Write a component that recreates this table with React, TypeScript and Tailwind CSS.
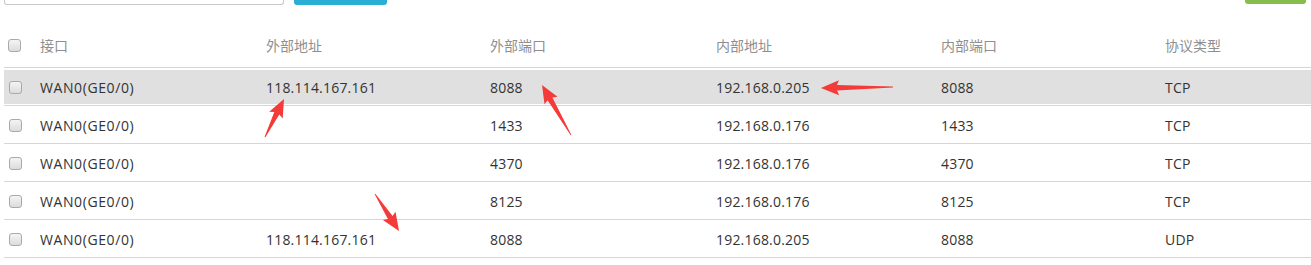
import React from 'react';

type Row = {
  iface: string;
  extAddr: string;
  extPort: string;
  intAddr: string;
  intPort: string;
  proto: string;
  active?: boolean;
};

const rows: Row[] = [
  { iface: 'WAN0(GE0/0)', extAddr: '118.114.167.161', extPort: '8088', intAddr: '192.168.0.205', intPort: '8088', proto: 'TCP', active: true },
  { iface: 'WAN0(GE0/0)', extAddr: '', extPort: '1433', intAddr: '192.168.0.176', intPort: '1433', proto: 'TCP' },
  { iface: 'WAN0(GE0/0)', extAddr: '', extPort: '4370', intAddr: '192.168.0.176', intPort: '4370', proto: 'TCP' },
  { iface: 'WAN0(GE0/0)', extAddr: '', extPort: '8125', intAddr: '192.168.0.176', intPort: '8125', proto: 'TCP' },
  { iface: 'WAN0(GE0/0)', extAddr: '118.114.167.161', extPort: '8088', intAddr: '192.168.0.205', intPort: '8088', proto: 'UDP' },
];

// red annotation arrows: [tailX, tailY, tipX, tipY]
const arrows: [number, number, number, number][] = [
  [265, 137, 284, 99],
  [571, 135, 542, 85],
  [893, 87, 821, 88],
  [375, 194, 399, 231],
];

function arrowPoints(tx: number, ty: number, hx: number, hy: number) {
  const dx = hx - tx;
  const dy = hy - ty;
  const len = Math.hypot(dx, dy);
  const ux = dx / len;
  const uy = dy / len;
  const nx = -uy;
  const ny = ux;
  const head = 16;
  const bx = hx - ux * head;
  const by = hy - uy * head;
  const p = (x: number, y: number) => `${x.toFixed(1)},${y.toFixed(1)}`;
  return [
    p(tx + nx * 0.4, ty + ny * 0.4),
    p(bx + nx * 2.8, by + ny * 2.8),
    p(bx - ux * 2 + nx * 7.5, by - uy * 2 + ny * 7.5),
    p(hx, hy),
    p(bx - ux * 2 - nx * 7.5, by - uy * 2 - ny * 7.5),
    p(bx - nx * 2.8, by - ny * 2.8),
    p(tx - nx * 0.4, ty - ny * 0.4),
  ].join(' ');
}

function Checkbox() {
  return (
    <span className="block w-[13px] h-[13px] rounded-[3px] border border-[#a9a9a9] bg-gradient-to-b from-[#f4f4f4] to-[#dcdcdc]" />
  );
}

export default function App() {
  return (
    <div
      className="relative w-[1311px] h-[265px] bg-white overflow-hidden text-[14px]"
      style={{ fontFamily: '"Open Sans", "Noto Sans CJK SC", sans-serif' }}
    >
      {/* top toolbar, mostly scrolled out of view */}
      <div className="h-[26px] flex items-start pl-[4px]">
        <div className="w-[280px] h-[5px] border-l border-r border-b border-[#c8c8c8] rounded-b-[3px]" />
        <div className="ml-[10px] w-[93px] h-[5px] bg-[#29afd4] rounded-b-[3px]" />
        <div className="ml-auto mr-[5px] w-[61px] h-[4px] bg-[#86bd4c] rounded-b-[3px]" />
      </div>

      <div className="pl-[4px]">
        {/* header */}
        <div className="h-[42px] flex items-center border-b border-[#d6d6d6] text-[#8f8f8f] pb-[3px]">
          <div className="w-[36px] pl-[4px]">
            <Checkbox />
          </div>
          <div className="w-[226px]">接口</div>
          <div className="w-[224px]">外部地址</div>
          <div className="w-[226px]">外部端口</div>
          <div className="w-[225px]">内部地址</div>
          <div className="w-[224px]">内部端口</div>
          <div className="flex-1">协议类型</div>
        </div>

        {/* rows */}
        {rows.map((r, i) => (
          <div key={i} className="pt-[2px] pb-[1px] border-b border-[#d6d6d6]">
            <div className={`h-[34px] flex items-center text-[#333] tracking-[0.2px] ${r.active ? 'bg-[#e0e0e0]' : ''}`}>
              <div className="w-[36px] pl-[5px]">
                <Checkbox />
              </div>
              <div className="w-[226px] tracking-[0.6px]">{r.iface}</div>
              <div className="w-[224px]">{r.extAddr}</div>
              <div className="w-[226px]">{r.extPort}</div>
              <div className="w-[225px]">{r.intAddr}</div>
              <div className="w-[224px]">{r.intPort}</div>
              <div className="flex-1">{r.proto}</div>
            </div>
          </div>
        ))}
      </div>

      {/* annotation arrows */}
      <svg className="absolute inset-0 pointer-events-none" width="1311" height="265">
        {arrows.map(([a, b, c, d], i) => (
          <polygon key={i} points={arrowPoints(a, b, c, d)} fill="#f53a3a" />
        ))}
      </svg>
    </div>
  );
}
